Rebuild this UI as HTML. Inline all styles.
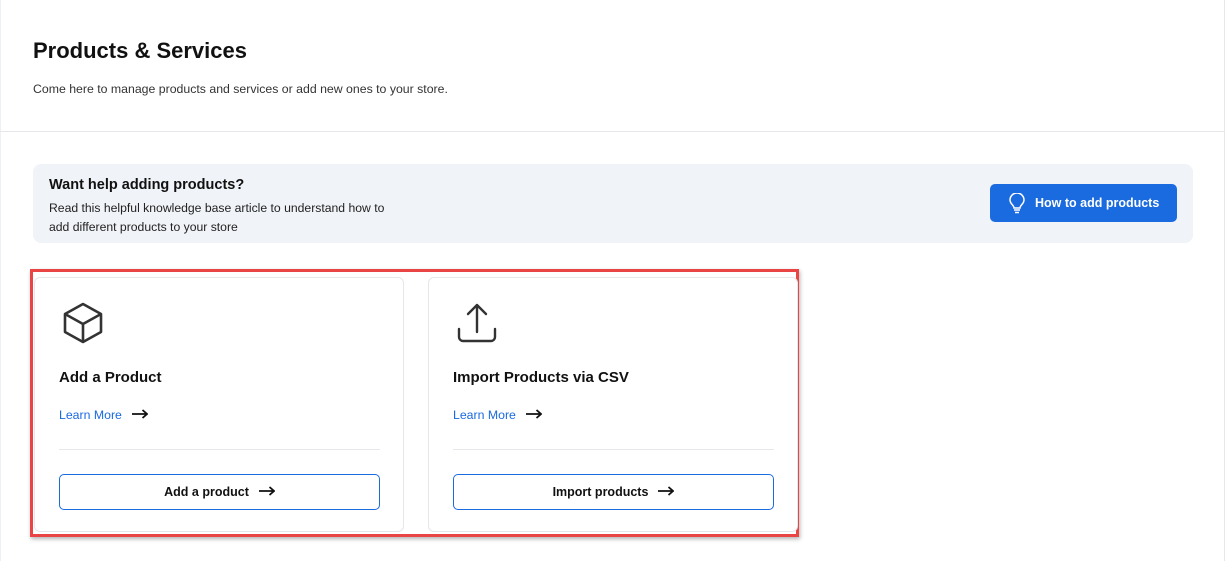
<!DOCTYPE html>
<html><head><style>
*{box-sizing:border-box;margin:0;padding:0}
body{width:1226px;height:561px;background:#fff;font-family:"Liberation Sans",sans-serif;color:#111;position:relative;overflow:hidden}
.rb{position:absolute;left:1224px;top:0;width:1px;height:561px;background:#e5e7eb}
.lb{position:absolute;left:0;top:0;width:1px;height:561px;background:#eef0f3}
h1{position:absolute;left:33px;top:38px;font-size:22px;font-weight:600;color:#111}
.sub{position:absolute;left:33px;top:82px;font-size:12.3px;color:#333}
.hr{position:absolute;left:0;top:131px;width:1225px;height:1px;background:#e5e7eb}
.help{position:absolute;left:33px;top:164px;width:1160px;height:79px;background:#f0f3f7;border-radius:8px}
.help b{position:absolute;left:16px;top:13px;font-size:14.5px;font-weight:600}
.help p{position:absolute;left:16px;top:35px;font-size:12.2px;line-height:19px;color:#222}
.btn{position:absolute;left:957px;top:20px;width:187px;height:38px;background:#1a6ae0;border-radius:5px;color:#fff;font-size:12.5px;font-weight:bold}
.btn span{position:absolute;left:45px;top:12px}
.btn svg{position:absolute;left:18px;top:9px}
.red{position:absolute;left:30px;top:269px;width:769px;height:268px;border:3px solid #e94545;box-shadow:1px 2px 4px rgba(0,0,0,.3)}
.card{position:absolute;top:277px;width:370px;height:255px;border:1px solid #e5e7eb;border-radius:6px;background:#fff}
.card .ic{position:absolute;left:27px;top:24px}
.card h3{position:absolute;left:24px;top:91px;font-size:15px;font-weight:600}
.card .lm{position:absolute;left:24px;top:130px;font-size:12.3px;color:#1a6ae0}
.ar{margin-left:10px;vertical-align:0px}
.card .sep{position:absolute;left:24px;top:171px;width:321px;height:1px;background:#e5e7eb}
.card .ob{position:absolute;left:24px;top:196px;width:321px;height:36px;border:1px solid #1a6ae0;border-radius:5px;text-align:center;font-size:12.5px;font-weight:600;line-height:34px}
</style></head><body>
<div class="lb"></div><div class="rb"></div>
<h1>Products &amp; Services</h1>
<div class="sub">Come here to manage products and services or add new ones to your store.</div>
<div class="hr"></div>
<div class="help"><b>Want help adding products?</b><p>Read this helpful knowledge base article to understand how to<br>add different products to your store</p>
<div class="btn"><svg width="18" height="22" viewBox="0 0 18 22" fill="none" stroke="#fff" stroke-width="1.5"><path d="M6 15c0-3-4-4-4-8a7 7 0 0114 0c0 4-4 5-4 8z"/><path d="M6 17h6M7 19.5h4"/></svg><span>How to add products</span></div></div>
<div class="red"></div>
<div class="card" style="left:34px">
<svg class="ic" width="42" height="42" viewBox="0 0 42 42" fill="none" stroke="#333" stroke-width="2.6" stroke-linejoin="round"><path d="M21 2L39 12V30L21 40 3 30V12Z"/><path d="M3 12L21 22 39 12M21 22V40"/></svg>
<h3>Add a Product</h3><div class="lm">Learn More<svg class="ar" width="16" height="10" viewBox="0 0 16 10" fill="none" stroke="#111" stroke-width="1.8"><path d="M0 5H15M10.5 1L15 5 10.5 9"/></svg></div><div class="sep"></div><div class="ob">Add a product<svg class="ar" width="16" height="10" viewBox="0 0 16 10" fill="none" stroke="#111" stroke-width="1.8"><path d="M0 5H15M10.5 1L15 5 10.5 9"/></svg></div></div>
<div class="card" style="left:428px">
<svg class="ic" width="42" height="42" viewBox="0 0 42 42" fill="none" stroke="#333" stroke-width="2.4" stroke-linecap="round" stroke-linejoin="round"><path d="M21 3V30M12 12L21 3 30 12M3 27V35a4 4 0 004 4H35a4 4 0 004-4V27"/></svg>
<h3>Import Products via CSV</h3><div class="lm">Learn More<svg class="ar" width="16" height="10" viewBox="0 0 16 10" fill="none" stroke="#111" stroke-width="1.8"><path d="M0 5H15M10.5 1L15 5 10.5 9"/></svg></div><div class="sep"></div><div class="ob">Import products<svg class="ar" width="16" height="10" viewBox="0 0 16 10" fill="none" stroke="#111" stroke-width="1.8"><path d="M0 5H15M10.5 1L15 5 10.5 9"/></svg></div></div>
</body></html>
